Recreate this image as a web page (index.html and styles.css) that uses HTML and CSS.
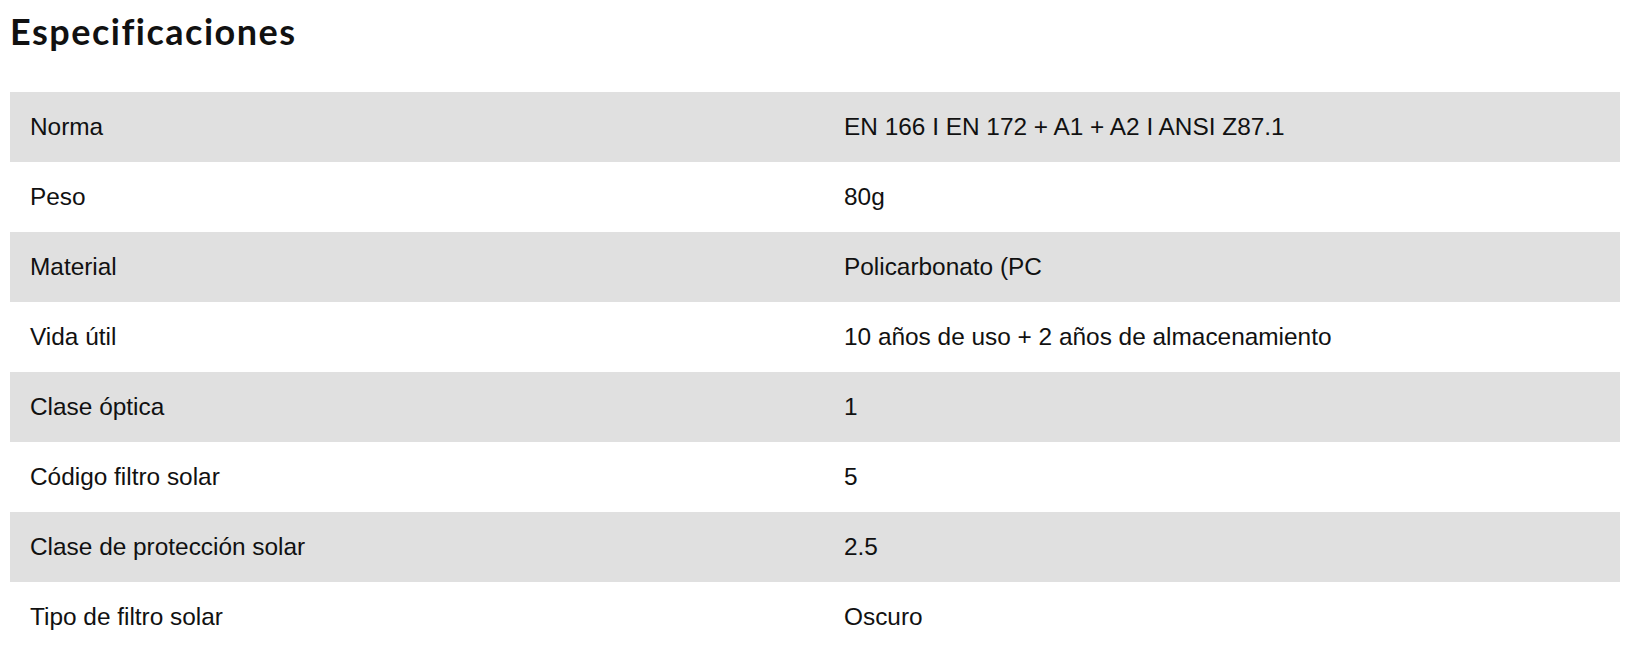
FILE: index.html
```html
<!DOCTYPE html>
<html lang="es">
<head>
<meta charset="utf-8">
<title>Especificaciones</title>
<link rel="stylesheet" href="styles.css">
</head>
<body>
<section class="specs">
  <h2 class="specs-title">Especificaciones</h2>
  <div class="specs-table">
    <div class="row"><div class="cell">Norma</div><div class="cell value">EN 166 I EN 172 + A1 + A2 I ANSI Z87.1</div></div>
    <div class="row"><div class="cell">Peso</div><div class="cell value">80g</div></div>
    <div class="row"><div class="cell">Material</div><div class="cell value">Policarbonato (PC</div></div>
    <div class="row"><div class="cell">Vida útil</div><div class="cell value">10 años de uso + 2 años de almacenamiento</div></div>
    <div class="row"><div class="cell">Clase óptica</div><div class="cell value">1</div></div>
    <div class="row"><div class="cell">Código filtro solar</div><div class="cell value">5</div></div>
    <div class="row"><div class="cell">Clase de protección solar</div><div class="cell value">2.5</div></div>
    <div class="row"><div class="cell">Tipo de filtro solar</div><div class="cell value">Oscuro</div></div>
  </div>
</section>
</body>
</html>
```
FILE: styles.css
```css
html, body {
  margin: 0;
  padding: 0;
  background: #ffffff;
}
.specs {
  padding: 0 15px 0 10px;
}
.specs-title {
  margin: 0;
  padding-top: 9px;
  height: 92px;
  box-sizing: border-box;
  font-family: "Lato", "Open Sans", sans-serif;
  font-weight: 700;
  font-size: 36px;
  line-height: 44px;
  letter-spacing: 1.5px;
  color: #111111;
}
.specs-table {
  display: flex;
  flex-direction: column;
}
.row {
  display: grid;
  grid-template-columns: 1fr 1fr;
  height: 70px;
  align-items: center;
  font-family: "Liberation Sans", Arial, sans-serif;
  font-size: 24.4px;
  color: #111111;
}
.row:nth-child(odd) {
  background: #e0e0e0;
}
.cell {
  padding: 0 20px;
}
.cell.value {
  padding-left: 29px;
}
```
